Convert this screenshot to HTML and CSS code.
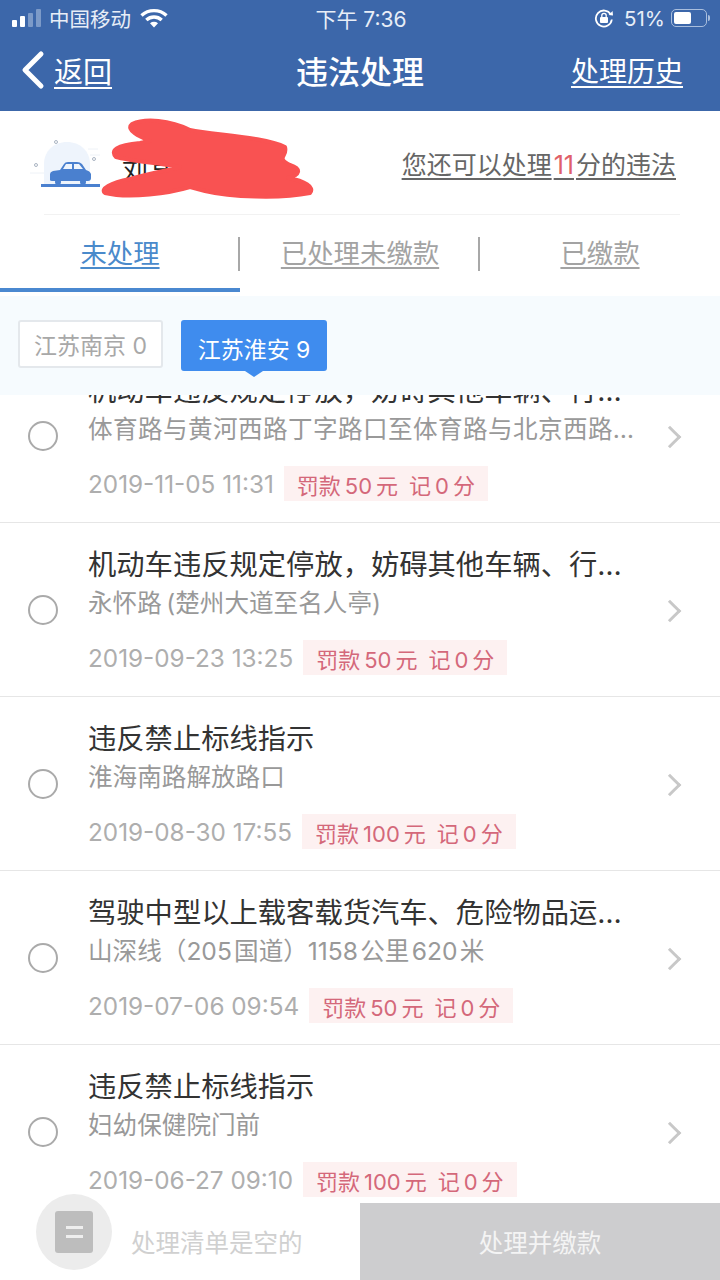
FILE: index.html
```html
<!DOCTYPE html>
<html>
<head lang="zh-CN">
    <meta charset="UTF-8">
    <title>违法处理</title>
    <link rel="stylesheet" href="styles.css">
</head>
<body>
<div class="page">
    <div class="top">
        <div class="status">
            <div class="status-left">
                <span class="signal"><i class="on s1"></i><i class="on s2"></i><i class="s3"></i><i class="s4"></i></span>
                <span>中国移动</span>
                <svg class="wifi" width="28" height="20" viewBox="0 0 28 20">
                    <path d="M1.5 7.5C8.5 1 19.500 1 26.500 7.500" fill="none" stroke="#fff" stroke-width="3.400"/>
                    <path d="M6.300 12C10.800 8 17.200 8 21.700 12" fill="none" stroke="#fff" stroke-width="3.400"/>
                    <path d="M10 15.200C12.400 13.300 15.600 13.300 18 15.200L14 19.500Z" fill="#fff"/>
                </svg>
            </div>
            <div class="status-time">下午 7:36</div>
            <div class="status-right">
                <svg width="20" height="20" viewBox="0 0 20 20">
                    <path d="M16.800 6.500A8 8 0 1 0 17.800 11.500" fill="none" stroke="#fff" stroke-width="1.800"/>
                    <path d="M14.600 7L19 7.400L18.600 3Z" fill="#fff"/>
                    <rect x="6" y="9" width="8" height="6" rx="1" fill="#fff"/>
                    <path d="M7.800 9V7.500A2.200 2.200 0 0 1 12.200 7.500V9" fill="none" stroke="#fff" stroke-width="1.300"/>
                </svg>
                <span class="percent">51%</span>
                <span class="battery"><i></i></span><span class="battery-tip"></span>
            </div>
        </div>
        <div class="nav">
            <a class="back">
                <svg width="26" height="40" viewBox="0 0 26 40"><path d="M21 4L5 20L21 36" fill="none" stroke="#fff" stroke-width="5" stroke-linecap="round" stroke-linejoin="round"/></svg>
                <span>返回</span>
            </a>
            <div class="nav-title">违法处理</div>
            <a class="history">处理历史</a>
        </div>
    </div>

    <div class="user">
        <svg class="car" width="72" height="56" viewBox="0 0 72 56">
            <path d="M14 49V29C14 16 24 7 37 7C50 7 60 16 60 29V49Z" fill="#eef4fc"/>
            <path d="M0 38H14M58 14H68M60 20H70" stroke="#eef2f7" stroke-width="1"/>
            <circle cx="26" cy="7" r="1.500" fill="none" stroke="#a9b4c2"/>
            <circle cx="6" cy="30" r="1.500" fill="none" stroke="#a9b4c2"/>
            <circle cx="64" cy="24" r="1.500" fill="none" stroke="#a9b4c2"/>
            <path d="M30 35L34 29Q35 27 38 27H47Q50 27 52 29L56 35Z" fill="#4a80cf"/>
            <path d="M20 45V39Q20 37 23 36L30 35H56Q60 36 61 39V43Q61 46 58 46H22Q20 46 20 45Z" fill="#4a80cf"/>
            <path d="M33 34L36 29H42V34ZM44 29H49L53 34H44Z" fill="#eef4fc"/>
            <circle cx="28" cy="47" r="3" fill="#4a80cf"/>
            <circle cx="53" cy="47" r="3" fill="#4a80cf"/>
            <rect x="11" y="49" width="59" height="3" fill="#4a80cf"/>
        </svg>
        <span class="name">刘某某</span>
        <a class="remain">您还可以处理<em>11</em>分的违法</a>
    </div>

    <div class="tabs">
        <a class="tab active"><span>未处理</span></a>
        <a class="tab"><span>已处理未缴款</span></a>
        <a class="tab"><span>已缴款</span></a>
    </div>

    <div class="filter">
        <span class="city">江苏南京 0</span>
        <span class="city current">江苏淮安 9</span>
    </div>

    <div class="list">
        <div class="list-inner">
            <div class="item">
                <span class="radio"></span>
                <div class="info">
                    <div class="title">机动车违反规定停放，妨碍其他车辆、行…</div>
                    <div class="place wide">体育路与黄河西路丁字路口至体育路与北京西路…</div>
                    <div class="meta"><span class="date">2019-11-05 11:31</span><span class="fine">罚款&thinsp;50&thinsp;元&ensp;记&thinsp;0&thinsp;分</span></div>
                </div>
                <span class="arrow"></span>
            </div>
            <div class="item">
                <span class="radio"></span>
                <div class="info">
                    <div class="title">机动车违反规定停放，妨碍其他车辆、行…</div>
                    <div class="place">永怀路&thinsp;(楚州大道至名人亭)</div>
                    <div class="meta"><span class="date">2019-09-23 13:25</span><span class="fine">罚款&thinsp;50&thinsp;元&ensp;记&thinsp;0&thinsp;分</span></div>
                </div>
                <span class="arrow"></span>
            </div>
            <div class="item">
                <span class="radio"></span>
                <div class="info">
                    <div class="title">违反禁止标线指示</div>
                    <div class="place">淮海南路解放路口</div>
                    <div class="meta"><span class="date">2019-08-30 17:55</span><span class="fine">罚款&thinsp;100&thinsp;元&ensp;记&thinsp;0&thinsp;分</span></div>
                </div>
                <span class="arrow"></span>
            </div>
            <div class="item">
                <span class="radio"></span>
                <div class="info">
                    <div class="title">驾驶中型以上载客载货汽车、危险物品运…</div>
                    <div class="place">山深线（205&#8202;国道）1158&#8202;公里&#8202;620&#8202;米</div>
                    <div class="meta"><span class="date">2019-07-06 09:54</span><span class="fine">罚款&thinsp;50&thinsp;元&ensp;记&thinsp;0&thinsp;分</span></div>
                </div>
                <span class="arrow"></span>
            </div>
            <div class="item">
                <span class="radio"></span>
                <div class="info">
                    <div class="title">违反禁止标线指示</div>
                    <div class="place">妇幼保健院门前</div>
                    <div class="meta"><span class="date">2019-06-27 09:10</span><span class="fine">罚款&thinsp;100&thinsp;元&ensp;记&thinsp;0&thinsp;分</span></div>
                </div>
                <span class="arrow"></span>
            </div>
        </div>
    </div>

    <div class="footer">
        <div class="cart">
            <span class="cart-circle"><span class="cart-doc"><i></i><i></i></span></span>
            <span class="cart-text">处理清单是空的</span>
        </div>
        <div class="pay">处理并缴款</div>
    </div>

    <!-- name covered with a red scribble -->
    <svg class="scribble" width="230" height="90" viewBox="0 0 230 90">
        <path d="M32 9C45 3 70 5 90 15C115 20 165 22 185 32C188 42 175 42 190 50C202 54 200 60 188 63C205 66 215 72 210 78C180 84 130 82 105 76L90 72C70 78 30 84 5 78C0 74 10 68 30 64C50 58 70 55 80 52C60 48 30 46 16 42C10 36 16 30 40 28L50 26C40 22 25 15 32 9Z" fill="#f95252" stroke="#f95252" stroke-width="4" stroke-linejoin="round"/>
    </svg>
</div>
</body>
</html>
```

FILE: styles.css
```css
*{
    margin:0;
    padding:0;
    box-sizing:border-box;
}
body{
    margin:0;
    font-family:"Inter","Liberation Sans","Noto Sans CJK SC",sans-serif;
    background:#fff;
}
.page{
    width:720px;
    height:1280px;
    position:relative;
    overflow:hidden;
    display:flex;
    flex-direction:column;
}
.top{
    height:111px;
    background:#3c67aa;
    color:#fff;
    flex:none;
}
.status{
    height:36px;
    padding:0 10px 0 12px;
    display:flex;
    align-items:center;
    justify-content:space-between;
    font-size:20.5px;
    color:#e8eef7;
}
.status-left,.status-right{
    width:250px;
    display:flex;
    align-items:center;
}
.status-right{
    justify-content:flex-end;
}
.status-time{
    font-size:21px;
}
.signal{
    display:flex;
    align-items:flex-end;
    gap:3px;
    margin-right:8px;
}
.signal i{
    display:block;
    width:5px;
    background:#7c9ac8;
    border-radius:1px;
}
.signal .on{
    background:#fff;
}
.s1{height:7px;}
.s2{height:11px;}
.s3{height:14px;}
.s4{height:18px;}
.wifi{
    margin-left:9px;
}
.percent{
    margin-left:10px;
}
.battery{
    width:36px;
    height:18px;
    margin-left:6px;
    padding:2px;
    border:1px solid #a9bedd;
    border-radius:5px;
    display:block;
}
.battery i{
    display:block;
    width:17px;
    height:12px;
    background:#fff;
    border-radius:2px;
}
.battery-tip{
    width:2px;
    height:6px;
    margin-left:1px;
    background:#a9bedd;
    border-radius:0 2px 2px 0;
}
.nav{
    height:68px;
    padding:0 37px 0 20px;
    display:flex;
    align-items:center;
    justify-content:space-between;
    position:relative;
}
.back{
    display:flex;
    align-items:center;
    gap:8px;
    font-size:29px;
    text-decoration:underline;
    text-underline-offset:4px;
}
.nav-title{
    position:absolute;
    left:0;
    right:0;
    text-align:center;
    font-size:32px;
    font-weight:500;
}
.history{
    font-size:28px;
    text-decoration:underline;
    text-underline-offset:4px;
}
.user{
    height:104px;
    margin:0 40px 0 44px;
    padding:0 4px 0 0;
    display:flex;
    align-items:center;
    border-bottom:1px solid #f2f2f2;
    flex:none;
}
.car{
    margin:1px 0 0 -14px;
}
.name{
    margin:12px 0 0 20px;
    font-size:26px;
    color:#222;
}
.remain{
    margin-left:auto;
    font-size:25px;
    color:#666;
    text-decoration:underline;
    text-underline-offset:4px;
}
.remain em{
    margin:0 2px;
    font-style:normal;
    color:#e0606a;
}
.tabs{
    height:77px;
    display:flex;
    flex:none;
}
.tab{
    flex:1;
    display:flex;
    align-items:center;
    justify-content:center;
    font-size:26.400px;
    color:#a3a3a3;
    text-decoration:underline;
    text-underline-offset:4px;
    position:relative;
    border-bottom:4px solid transparent;
}
.tab + .tab::before{
    content:"";
    position:absolute;
    left:-2px;
    top:22px;
    width:2px;
    height:34px;
    background:#a8a8a8;
}
.tab.active{
    color:#4a8acb;
    border-bottom-color:#4a88d0;
}
.filter{
    height:99px;
    margin-top:4px;
    padding:24px 18px 0;
    background:#f6fbfe;
    display:flex;
    align-items:flex-start;
    gap:18px;
    flex:none;
}
.city{
    width:145px;
    height:48px;
    display:flex;
    align-items:center;
    justify-content:center;
    font-size:23px;
    color:#a8a8a8;
    background:#fff;
    border:2px solid #e4e8ec;
    border-radius:3px;
}
.city.current{
    width:146px;
    height:51px;
    padding-top:5px;
    color:#fff;
    background:#3f8cee;
    border-color:#3f8cee;
    position:relative;
}
.city.current::after{
    content:"";
    position:absolute;
    left:50%;
    bottom:-8px;
    margin-left:-9px;
    border-style:solid;
    border-width:6px 9px 0;
    border-color:#3f8cee transparent transparent;
}
.list{
    flex:1;
    overflow:hidden;
}
.list-inner{
    margin-top:-46px;
}
.item{
    height:174px;
    padding-left:28px;
    border-bottom:1px solid #e6e6e6;
    display:flex;
    align-items:flex-start;
}
.radio{
    width:30px;
    height:30px;
    margin-top:72px;
    border:2px solid #aaa;
    border-radius:50%;
    flex:none;
}
.info{
    width:546px;
    margin-left:30px;
    padding-top:25px;
}
.title{
    font-size:28.300px;
    line-height:34px;
    color:#333;
    white-space:nowrap;
}
.place{
    margin-top:4px;
    font-size:24.600px;
    line-height:34px;
    color:#999;
    white-space:nowrap;
}
.place.wide{
    letter-spacing:.4px;
}
.meta{
    margin-top:20px;
    display:flex;
    align-items:center;
}
.date{
    font-size:24.300px;
    color:#aeaeae;
}
.fine{
    height:35px;
    margin-left:10px;
    padding:0 13px;
    display:flex;
    align-items:center;
    white-space:pre;
    font-size:22px;
    color:#d4687a;
    background:#fdf1f1;
}
.arrow{
    width:16px;
    height:16px;
    margin:80px 0 0 28px;
    border-top:3.500px solid #c8c8c8;
    border-right:3.500px solid #c8c8c8;
    transform:rotate(45deg);
    flex:none;
}
.footer{
    height:77px;
    display:flex;
    flex:none;
    background:#fff;
    position:relative;
}
.cart{
    width:360px;
    display:flex;
    align-items:center;
    padding-left:131px;
    font-size:24.500px;
    color:#d0d0d0;
}
.cart-circle{
    position:absolute;
    left:36px;
    top:-9px;
    width:76px;
    height:76px;
    background:#ececec;
    border-radius:50%;
    display:flex;
    align-items:center;
    justify-content:center;
}
.cart-doc{
    width:38px;
    height:42px;
    background:#bdbdbd;
    border-radius:3px;
    display:flex;
    flex-direction:column;
    align-items:center;
    justify-content:center;
    gap:6px;
}
.cart-doc i{
    display:block;
    width:17px;
    height:3px;
    background:#eee;
}
.pay{
    flex:1;
    background:#cdcdcf;
    color:#f4f4f4;
    font-size:24.500px;
    display:flex;
    align-items:center;
    justify-content:center;
}
.scribble{
    position:absolute;
    left:100px;
    top:115px;
}
```
